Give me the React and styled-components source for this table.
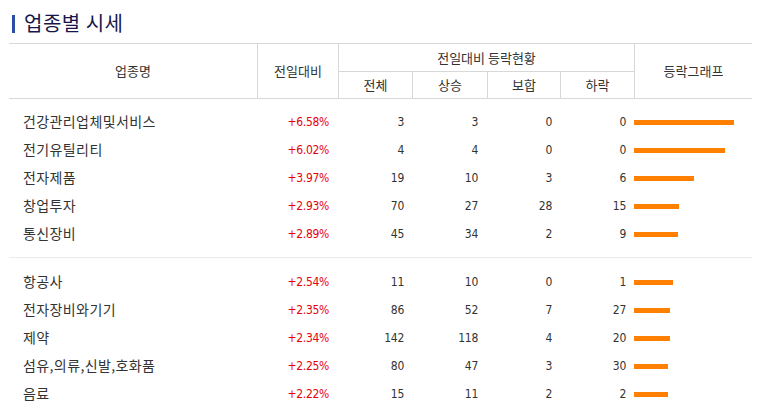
import React from "react";
import styled, { createGlobalStyle } from "styled-components";

const Global = createGlobalStyle`
  html, body { margin: 0; padding: 0; background: #fff; }
  body { font-family: "Noto Sans CJK KR", "Noto Sans", sans-serif; color: #333; }
`;

const COLS = "249px 81px 74px 75px 73px 74px 117px";

const Page = styled.div`
  width: 761px;
  padding: 5px 0 0 9px;
  box-sizing: border-box;
`;

const Title = styled.h2`
  margin: 0 0 2px 3px;
  height: 36px;
  display: flex;
  align-items: center;
  gap: 9px;
  font-size: 20px;
  font-weight: 400;
  line-height: 24px;
  color: #16164a;
  letter-spacing: 0.5px;
  &::before {
    content: "";
    width: 3px;
    height: 18px;
    margin-top: 1px;
    background: #2a4ea6;
  }
`;

const Table = styled.div`
  width: 743px;
`;

const Head = styled.div`
  display: grid;
  grid-template-columns: ${COLS};
  grid-template-rows: 28px 26px;
  border-top: 1px solid #d8d8d8;
  border-bottom: 1px solid #d8d8d8;
`;

const Th = styled.div`
  grid-column: ${(p) => p.$col};
  grid-row: ${(p) => p.$row};
  display: flex;
  align-items: center;
  justify-content: center;
  font-size: 13px;
  color: #333;
  box-sizing: border-box;
  padding-bottom: 1px;
  border-right: ${(p) => (p.$noRight ? "none" : "1px solid #d8d8d8")};
  border-bottom: ${(p) => (p.$bottom ? "1px solid #d8d8d8" : "none")};
  background: #fff;
`;

const Group = styled.div`
  padding: ${(p) => p.$pt}px 0 ${(p) => p.$pb}px;
  border-top: ${(p) => (p.$line ? "1px solid #ebebeb" : "none")};
`;

const Row = styled.div`
  display: grid;
  grid-template-columns: ${COLS};
  height: 28px;
  align-items: center;
`;

const Name = styled.div`
  padding: 0 0 3px 14px;
  font-size: 14px;
  letter-spacing: 0.4px;
  color: #333;
  white-space: nowrap;
`;

const Num = styled.div`
  text-align: right;
  padding-right: ${(p) => p.$pr || 9}px;
  font-family: "DejaVu Sans Condensed", "DejaVu Sans", sans-serif;
  font-stretch: condensed;
  font-size: 12px;
  letter-spacing: -0.3px;
  color: ${(p) => (p.$up ? "#e8000b" : "#333")};
`;

const BarCell = styled.div`
  display: flex;
  align-items: center;
  margin-left: -1px;
`;

const Bar = styled.div`
  height: 5px;
  background: #ff7f00;
`;

const groups = [
  [
    ["건강관리업체및서비스", 6.58, 3, 3, 0, 0],
    ["전기유틸리티", 6.02, 4, 4, 0, 0],
    ["전자제품", 3.97, 19, 10, 3, 6],
    ["창업투자", 2.93, 70, 27, 28, 15],
    ["통신장비", 2.89, 45, 34, 2, 9],
  ],
  [
    ["항공사", 2.54, 11, 10, 0, 1],
    ["전자장비와기기", 2.35, 86, 52, 7, 27],
    ["제약", 2.34, 142, 118, 4, 20],
    ["섬유,의류,신발,호화품", 2.25, 80, 47, 3, 30],
    ["음료", 2.22, 15, 11, 2, 2],
  ],
];

const MAX = 6.58;

export default function App() {
  return (
    <Page>
      <Global />
      <Title>업종별 시세</Title>
      <Table>
        <Head>
          <Th $col="1" $row="1 / 3">업종명</Th>
          <Th $col="2" $row="1 / 3">전일대비</Th>
          <Th $col="3 / 7" $row="1" $bottom>전일대비 등락현황</Th>
          <Th $col="3" $row="2">전체</Th>
          <Th $col="4" $row="2">상승</Th>
          <Th $col="5" $row="2">보합</Th>
          <Th $col="6" $row="2">하락</Th>
          <Th $col="7" $row="1 / 3" $noRight>등락그래프</Th>
        </Head>
        {groups.map((g, gi) => (
          <Group key={gi} $pt={gi === 0 ? 9 : 10} $pb={gi === 0 ? 9 : 0} $line={gi > 0}>
            {g.map(([name, pct, total, up, flat, down]) => (
              <Row key={name}>
                <Name>{name}</Name>
                <Num $up $pr={10}>+{pct.toFixed(2)}%</Num>
                <Num>{total}</Num>
                <Num $pr={10}>{up}</Num>
                <Num>{flat}</Num>
                <Num>{down}</Num>
                <BarCell>
                  <Bar style={{ width: `${Math.round((pct / MAX) * 100)}px` }} />
                </BarCell>
              </Row>
            ))}
          </Group>
        ))}
      </Table>
    </Page>
  );
}
